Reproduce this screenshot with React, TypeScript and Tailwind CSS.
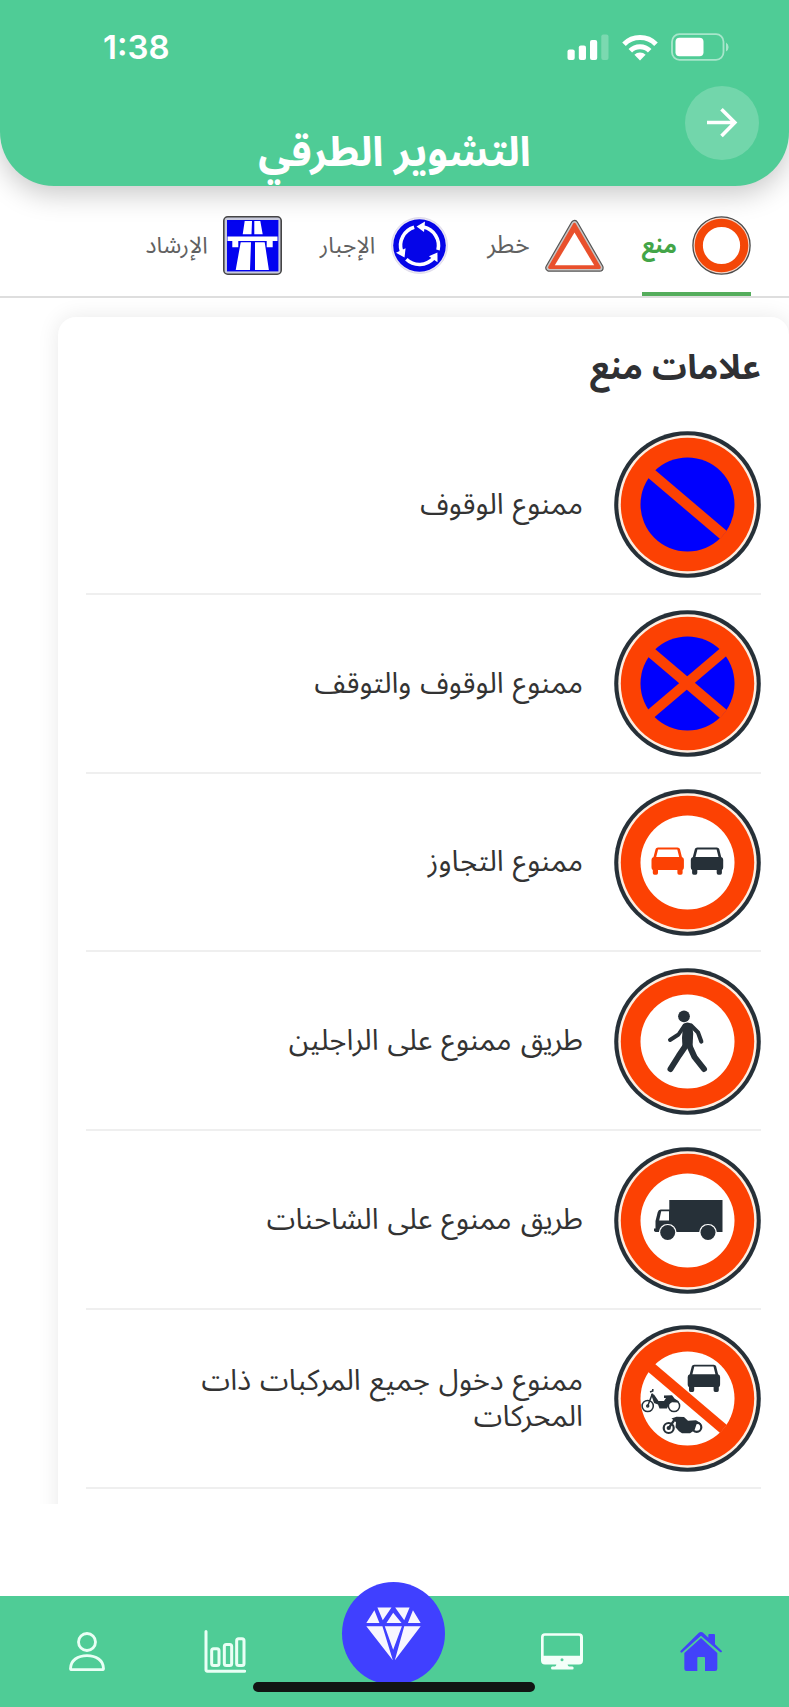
import React from 'react'

const RED = '#fc4103'
const DARK = '#263038'
const BLUE = '#0000fe'

const CarShape: React.FC<{ x: number; y: number; color: string }> = ({ x, y, color }) => (
    <g transform={`translate(${x} ${y})`} fill={color}>
        <path
            fillRule="evenodd"
            d="M6.5 0h19.5q2 0 2.4 1.600l2 8q2 .6 2 2.700v7.400q0 2-1.300 2.700v3.200q0 1.600-1.600 1.600h-2q-1.600 0-1.600-1.600v-3.200H6.500v3.200q0 1.600-1.600 1.600h-2q-1.600 0-1.600-1.600v-3.200Q0 21.700 0 19.700v-7.400q0-2.100 2-2.700l2.100-8Q4.500 0 6.500 0zM6.600 1.900L4.700 9.600h23L25.800 1.900z"
        />
    </g>
)

const SignPlate: React.FC<{ children?: React.ReactNode; inner?: string }> = ({ children, inner = '#fff' }) => (
    <svg className="h-[147px] w-[147px] shrink-0" viewBox="0 0 147 147" fill="none" aria-hidden="true">
        <circle cx="73.500" cy="73.500" r="73.300" fill={DARK} />
        <circle cx="73.500" cy="73.500" r="69.200" fill="#fdeee2" />
        <circle cx="73.500" cy="73.500" r="66.700" fill={RED} />
        <circle cx="73.500" cy="73.500" r="47" fill={inner} />
        {children}
    </svg>
)

const Slash: React.FC = () => <path d="M36.500 42L109.500 104" stroke={RED} strokeWidth={10.5} />

const NoParkingSign: React.FC = () => (
    <SignPlate inner={BLUE}>
        <Slash />
    </SignPlate>
)

const NoStoppingSign: React.FC = () => (
    <SignPlate inner={BLUE}>
        <Slash />
        <path d="M109.500 42L36.500 104" stroke={RED} strokeWidth={10} />
    </SignPlate>
)

const NoOvertakingSign: React.FC = () => (
    <SignPlate>
        <CarShape x={37.5} y={58.5} color={RED} />
        <CarShape x={76.8} y={58.5} color={DARK} />
    </SignPlate>
)

const NoPedestriansSign: React.FC = () => (
    <SignPlate>
        <circle cx="70" cy="48.300" r="5.900" fill={DARK} />
        <path d="M69 56.500q4.500-4 9 0l1.200 9-.7 14.500h-10l-.5-10z" fill={DARK} />
        <g stroke={DARK} strokeLinecap="round" strokeLinejoin="round">
            <path d="M70.500 57.500L64.500 66.500L56 72" strokeWidth={4} />
            <path d="M77 57.500L84 64.500L87.300 73.500" strokeWidth={4.200} />
            <path d="M71.500 78L65 87.500L56.500 101" strokeWidth={6} />
            <path d="M75.500 78L80.500 89L90 101" strokeWidth={6} />
        </g>
    </SignPlate>
)

const NoTrucksSign: React.FC = () => (
    <SignPlate>
        <path d="M55.300 53h53.200v32H41.500l-1.500-1v-2.500h1.500v-7.500l2.200-8.800q.7-2.700 3-2.700h8.600z" fill={DARK} />
        <path d="M47.200 64.200h7.800v9.300h-9.800z" fill="#fff" />
        <path d="M44.500 86.500q1-9.500 9.200-9.500t9.200 9.500z" fill="#fff" />
        <path d="M84.800 86.500q1-9.500 9.200-9.500t9.200 9.500z" fill="#fff" />
        <circle cx="53.700" cy="85.500" r="7.500" fill={DARK} />
        <circle cx="94" cy="85.500" r="7.500" fill={DARK} />
    </SignPlate>
)

const NoMotorVehiclesSign: React.FC = () => (
    <SignPlate>
        <Slash />
        <CarShape x={73.7} y={39.7} color={DARK} />
        {/* moped */}
        <g stroke={DARK} strokeWidth={1.500}>
            <circle cx="33.700" cy="81" r="5.600" />
            <circle cx="60" cy="81" r="5.600" />
            <path d="M33.700 81l4.800-12.500M36 67l2.800-1v-2" />
            <circle cx="33.700" cy="81" r="1" />
        </g>
        <path d="M37 69l3 .5 4.500 6.500h5.500l2-3h-2v-2.500l8-.3 2.500 3.300 4.500 3-2 1-5-.3-3 2-2 4.300h-7.500l-1.500-4-4-1.500z" fill={DARK} />
        {/* motorcycle */}
        <g stroke={DARK} strokeWidth={2.200}>
            <circle cx="54.700" cy="103" r="5" />
            <circle cx="54.700" cy="103" r="1" />
            <circle cx="82.700" cy="102.300" r="4.600" />
            <path d="M54.700 103l6-8.500" />
        </g>
        <path d="M57.500 93.500l5-1.800 7.500.2 4 3.800 8-.5 5 3.300-4.500.8-2 6-4.500 3h-8l-3-2-3.500-4 .5-5z" fill={DARK} />
    </SignPlate>
)

const ProhibitionIcon: React.FC = () => (
    <svg className="h-[59px] w-[59px]" viewBox="0 0 59 59" aria-hidden="true">
        <circle cx="29.500" cy="29.500" r="28.600" fill="#f3d5c8" stroke="#4b4b4b" strokeWidth={1.300} />
        <circle cx="29.500" cy="29.500" r="22.700" fill="#fff" stroke="#f44708" strokeWidth={8.200} />
    </svg>
)

const DangerIcon: React.FC = () => (
    <svg className="h-[59px] w-[59px]" viewBox="0 -1 59 59" strokeLinejoin="round" aria-hidden="true">
        <path d="M29.500 7L4.300 50.700h50.400z" fill="#555" stroke="#555" strokeWidth={8} />
        <path d="M29.500 7L4.300 50.700h50.400z" fill="#c9c4c2" stroke="#c9c4c2" strokeWidth={5.600} />
        <path d="M29.500 7.500L4.800 50.400h49.400z" fill="#e9502c" stroke="#e9502c" strokeWidth={3.200} />
        <path d="M29.500 15.500L9.800 48.300h39.400z" fill="#fff" />
    </svg>
)

const ObligationIcon: React.FC = () => (
    <svg className="h-[59px] w-[59px]" viewBox="-29.500 -29.500 59 59" aria-hidden="true">
        <circle r="28" fill="#e9e6f6" stroke="#d9d6e4" strokeWidth={0.800} />
        <circle r="26.300" fill="#0505e8" />
        {[0, 120, 240].map((deg) => (
            <g key={deg} transform={`rotate(${deg})`}>
                <path d="M18.500 4.500A19 19 0 0 0 4 -18.500" fill="none" stroke="#fff" strokeWidth={3.600} />
                <path d="M-3 -19L5.500 -24L4.500 -13.500z" fill="#fff" />
            </g>
        ))}
    </svg>
)

const GuidanceIcon: React.FC = () => (
    <svg className="h-[59px] w-[59px]" viewBox="0 0 59 59" aria-hidden="true">
        <rect x="0.800" y="0.800" width="57.400" height="57.400" rx="4" fill="#c9cbdc" stroke="#454545" strokeWidth={1.600} />
        <rect x="4" y="4" width="51.400" height="51.400" fill="#0303f0" />
        <g fill="#fff">
            <path d="M21.700 5h7.300l-.5 13.300h-8.800zM31.300 5h6l2.400 13.300h-8.400z" />
            <path d="M4.500 20.500h50v4.500h-4.800v6.300h-6V25H15.300v6.300h-6V25H4.500z" />
            <path d="M17.700 26.300H28L27 54H12.700zM32 26.300h9.700L45.900 54H32z" />
        </g>
    </svg>
)

const StatusBar: React.FC = () => (
    <div dir="ltr" className="flex h-[94px] items-center justify-between pr-[60px] pl-[103px]">
        <span className="font-['Inter',sans-serif] text-[33px] leading-none font-semibold">1:38</span>
        <div className="flex items-center gap-[13px]">
            <svg className="h-[27px] w-[42px]" viewBox="0 0 42 27" fill="currentColor" aria-hidden="true">
                <rect x="0.500" y="15.500" width="7.200" height="10.500" rx="2" />
                <rect x="11.800" y="11.500" width="7.200" height="14.500" rx="2" />
                <rect x="23" y="6" width="7.200" height="20" rx="2" />
                <rect x="34.300" y="0.500" width="7.200" height="25.500" rx="2" opacity="0.250" />
            </svg>
            <svg className="h-[27px] w-[36px]" viewBox="0 0 36 27" fill="none" stroke="currentColor" strokeWidth={5} aria-hidden="true">
                <path d="M2 10.200A22.500 22.500 0 0 1 34 10.200" />
                <path d="M8.300 16.800A13.600 13.600 0 0 1 27.700 16.800" />
                <path d="M18 26.500l-5.600-5.700a8 8 0 0 1 11.200 0z" fill="currentColor" stroke="none" />
            </svg>
            <svg className="h-[28px] w-[58px]" viewBox="0 0 58 28" fill="none" aria-hidden="true">
                <rect x="1" y="1.200" width="51.500" height="25.600" rx="7.500" stroke="currentColor" strokeWidth={1.800} opacity="0.500" />
                <rect x="4.500" y="4.800" width="28" height="18.400" rx="4" fill="currentColor" />
                <path d="M55 9.500q2.600 1.500 2.600 4.500t-2.600 4.500z" fill="currentColor" opacity="0.500" />
            </svg>
        </div>
    </div>
)

const Header: React.FC = () => (
    <header className="relative z-10 h-[186px] shrink-0 rounded-b-[54px] bg-[#4fcc96] text-white shadow-[0_8px_28px_rgba(0,0,0,0.22)]">
        <StatusBar />
        <h1 className="flex h-[92px] items-center justify-center pt-[26px] text-[41px] leading-none font-bold whitespace-nowrap">التشوير الطرقي</h1>
        <button className="absolute top-[86px] right-[30px] flex h-[74px] w-[74px] items-center justify-center rounded-full bg-white/20">
            <svg className="h-[30px] w-[32px]" viewBox="0 0 32 30" fill="none" stroke="currentColor" strokeWidth={3.600} aria-hidden="true">
                <path d="M1 14.500h28M15.500 1.300L28.800 14.500L15.500 28" />
            </svg>
        </button>
    </header>
)

const tabs = [
    { label: 'منع', icon: <ProhibitionIcon />, active: true, size: 'text-[23px]' },
    { label: 'خطر', icon: <DangerIcon />, active: false, size: 'text-[25px]' },
    { label: 'الإجبار', icon: <ObligationIcon />, active: false, size: 'text-[23px]' },
    { label: 'الإرشاد', icon: <GuidanceIcon />, active: false, size: 'text-[23px]' }
]

const Tabs: React.FC = () => (
    <nav className="flex h-[112px] shrink-0 gap-[38px] border-b-2 border-[#dedede] pr-[38px]">
        {tabs.map(({ label, icon, active, size }) => (
            <button
                key={label}
                className={`flex items-center gap-[15px] border-b-4 pt-[12px] leading-none whitespace-nowrap ${size} ${
                    active ? 'border-[#55ad5c] font-bold text-[#43a548]' : 'border-transparent text-[#616161]'
                }`}
            >
                {icon}
                <span>{label}</span>
            </button>
        ))}
    </nav>
)

const signs = [
    { label: 'ممنوع الوقوف', sign: <NoParkingSign /> },
    { label: 'ممنوع الوقوف والتوقف', sign: <NoStoppingSign /> },
    { label: 'ممنوع التجاوز', sign: <NoOvertakingSign /> },
    { label: 'طريق ممنوع على الراجلين', sign: <NoPedestriansSign /> },
    { label: 'طريق ممنوع على الشاحنات', sign: <NoTrucksSign /> },
    { label: 'ممنوع دخول جميع المركبات ذات المحركات', sign: <NoMotorVehiclesSign /> }
]

const SignList: React.FC = () => (
    <main className="h-[1206px] shrink-0 overflow-hidden pt-[19px] pr-0 pl-[58px]">
        <section className="h-[1300px] rounded-[18px] bg-white px-[28px] shadow-[0_0_22px_rgba(0,0,0,0.09)]">
            <h2 className="flex h-[99px] items-center pt-[4px] text-[34.5px] leading-none font-bold text-[#2f3033]">علامات منع</h2>
            <ul>
                {signs.map(({ label, sign }) => (
                    <li
                        key={label}
                        className="flex h-[178.800px] items-center gap-[31px] border-b-2 border-[#efefef] pt-px text-[29px] leading-9 [word-spacing:1.5px] text-[#333]"
                    >
                        {sign}
                        <span className="max-w-[420px]">{label}</span>
                    </li>
                ))}
            </ul>
        </section>
    </main>
)

const HomeIcon: React.FC = () => (
    <svg className="h-[39px] w-[42px]" viewBox="0 0 126 117" fill="#4242fa" aria-hidden="true">
        <path d="M63 0q4 0 8 4l14 13V9q0-3 3-3h14q3 0 3 3v28l20 19q2 2 0 4t-5 0L63 11L7 61q-3 2-5 0t0-5L55 4q4-4 8-4z" />
        <path d="M63 18l49 45v47q0 7-7 7H75V78q0-3-3-3H55q-3 0-3 3v39H20q-7 0-7-7V63z" />
    </svg>
)

const DesktopIcon: React.FC = () => (
    <svg className="h-[37px] w-[42px]" viewBox="0 0 126 110" fill="#f3fff9" aria-hidden="true">
        <path fillRule="evenodd" d="M12 0h102q12 0 12 12v70q0 12-12 12H80q0 5 4 6h10q4 0 4 4.500t-4 4.500H34q-4 0-4-4.500t4-4.500h8q4-1 4-6H12Q0 94 0 82V12Q0 0 12 0zM12 8q-4 0-4 4v56h109V12q0-4-4-4z" />
        <circle cx="63" cy="80" r="4.500" fill="#4fcc96" />
    </svg>
)

const DiamondIcon: React.FC = () => (
    <svg className="h-[54px] w-[55px]" viewBox="0 0 164 160" fill="#f8f6ff" aria-hidden="true">
        <path d="M25 9L40 47H1zM34 1H76L50 39zM81 17L106 47H61zM87 1H130L114 39zM140 9L163 47H125z" />
        <path d="M1 57H49L80 158zM56 57H107L81 127zM114 57H163L86 158z" />
    </svg>
)

const ChartIcon: React.FC = () => (
    <svg className="h-[43px] w-[42px]" viewBox="0 0 126 128" fill="none" stroke="#e9fff5" strokeWidth={9} strokeLinecap="round" strokeLinejoin="round" aria-hidden="true">
        <path d="M6 4V119q0 4 4 4H122" />
        <rect x="23" y="56" width="22" height="50" rx="6" />
        <rect x="61" y="43" width="22" height="63" rx="6" />
        <rect x="98" y="26" width="22" height="80" rx="6" />
    </svg>
)

const ProfileIcon: React.FC = () => (
    <svg className="h-[39px] w-[36px]" viewBox="0 0 108 117" fill="none" stroke="#e9fff5" strokeWidth={8.500} strokeLinejoin="round" aria-hidden="true">
        <circle cx="54" cy="30" r="25.500" />
        <path d="M4.500 110Q5 91 19 81Q33 71 54 71T89 81Q103 91 103.500 110q0 3-3 3H7.500q-3 0-3-3z" />
    </svg>
)

const BottomNav: React.FC = () => (
    <footer className="relative mt-[92px] flex h-[111px] shrink-0 justify-between bg-[#4fcc96] pr-[67px] pl-[69px]">
        <button className="flex h-full items-center">
            <HomeIcon />
        </button>
        <button className="flex h-full items-center">
            <DesktopIcon />
        </button>
        <button className="-mt-[14px] flex h-[103px] w-[103px] translate-x-px items-center justify-center rounded-full bg-[#4040ff]">
            <DiamondIcon />
        </button>
        <button className="flex h-full translate-x-0.5 items-center">
            <ChartIcon />
        </button>
        <button className="flex h-full items-center">
            <ProfileIcon />
        </button>
        {/* home indicator */}
        <div className="absolute bottom-[15px] left-[253px] h-[10px] w-[282px] rounded-full bg-[#111513]" />
    </footer>
)

export default function App() {
    return (
        <div dir="rtl" className="flex h-[1707px] w-[789px] flex-col overflow-hidden bg-white font-['Noto_Sans_Arabic','DejaVu_Sans',sans-serif]">
            <Header />
            <Tabs />
            <SignList />
            <BottomNav />
        </div>
    )
}
